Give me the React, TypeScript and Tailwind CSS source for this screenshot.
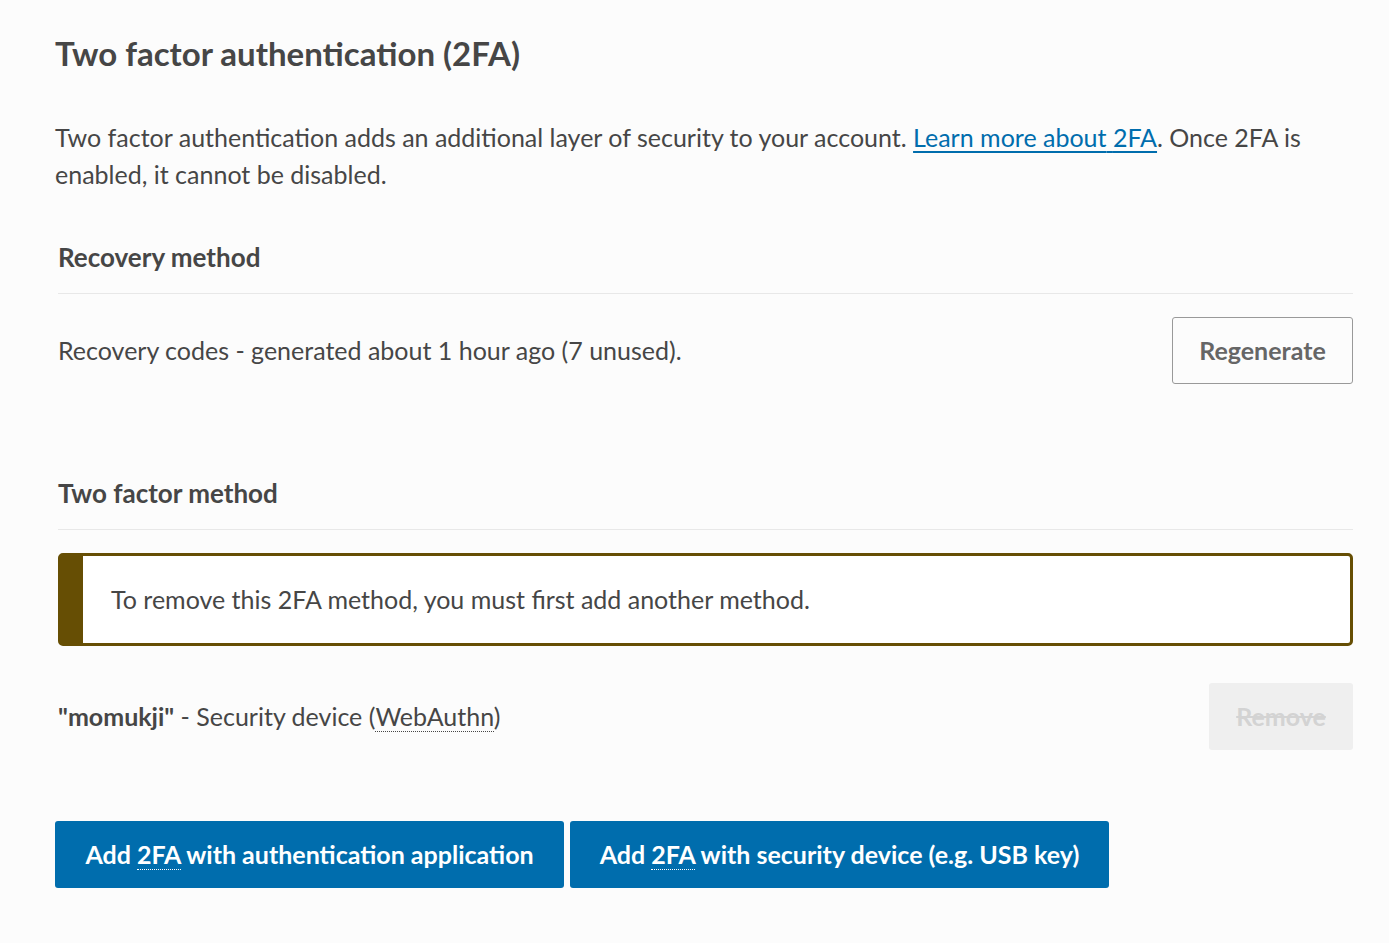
export default function App() {
  return (
    <div className="min-h-screen bg-[#fcfcfc] font-['Lato',sans-serif] text-[#464646]">
      <div className="pl-[55px] pr-[36px] pt-[33px]">
        <h2 className="text-[33px] font-bold leading-[40px]">Two factor authentication (2FA)</h2>
        <p className="mt-[46px] text-[25px] leading-[37px]">
          Two factor authentication adds an additional layer of security to your account.{" "}
          <a href="#" className="text-[#006dad] underline underline-offset-4">
            Learn more about{" "}
            <abbr title="two factor authentication" className="no-underline border-b border-dotted border-[#006dad]">
              2FA
            </abbr>
          </a>
          . Once 2FA is enabled, it cannot be disabled.
        </p>

        <div className="ml-[3px]">
          {/* Recovery */}
          <h3 className="mt-[46px] border-b border-[#e8e8e8] pb-[18px] text-[26px] font-bold leading-[36px]">
            Recovery method
          </h3>
          <div className="mt-[23px] flex items-center justify-between">
            <p className="text-[25px]">Recovery codes - generated about 1 hour ago (7 unused).</p>
            <button className="h-[67px] w-[181px] rounded-[3px] border border-[#999] bg-transparent text-[25px] font-bold text-[#666]">
              Regenerate
            </button>
          </div>

          {/* Two factor */}
          <h3 className="mt-[91px] border-b border-[#e8e8e8] pb-[18px] text-[26px] font-bold leading-[36px]">
            Two factor method
          </h3>
          <div className="mt-[23px] flex h-[93px] items-center rounded-[5px] border-[3px] border-l-[25px] border-[#664e04] bg-white pl-[28px]">
            <p className="text-[25px]">To remove this 2FA method, you must first add another method.</p>
          </div>
          <div className="mt-[37px] flex items-center justify-between">
            <p className="text-[25px]">
              <strong className="font-bold">"momukji"</strong> - Security device (
              <abbr title="web authentication" className="no-underline border-b border-dotted border-[#464646]">
                WebAuthn
              </abbr>
              )
            </p>
            <button
              disabled
              className="h-[67px] w-[144px] rounded-[3px] bg-[#efefef] text-[25px] font-bold text-[#d3d3d3] line-through"
            >
              Remove
            </button>
          </div>
        </div>

        {/* Add buttons */}
        <div className="mt-[71px] flex gap-[6px]">
          <button className="h-[67px] w-[509px] rounded-[3px] bg-[#006dad] text-[25px] font-bold text-white">
            Add{" "}
            <abbr title="two factor authentication" className="no-underline border-b border-dotted border-white">
              2FA
            </abbr>{" "}
            with authentication application
          </button>
          <button className="h-[67px] w-[539px] rounded-[3px] bg-[#006dad] text-[25px] font-bold text-white">
            Add{" "}
            <abbr title="two factor authentication" className="no-underline border-b border-dotted border-white">
              2FA
            </abbr>{" "}
            with security device (e.g. USB key)
          </button>
        </div>
      </div>
    </div>
  );
}
